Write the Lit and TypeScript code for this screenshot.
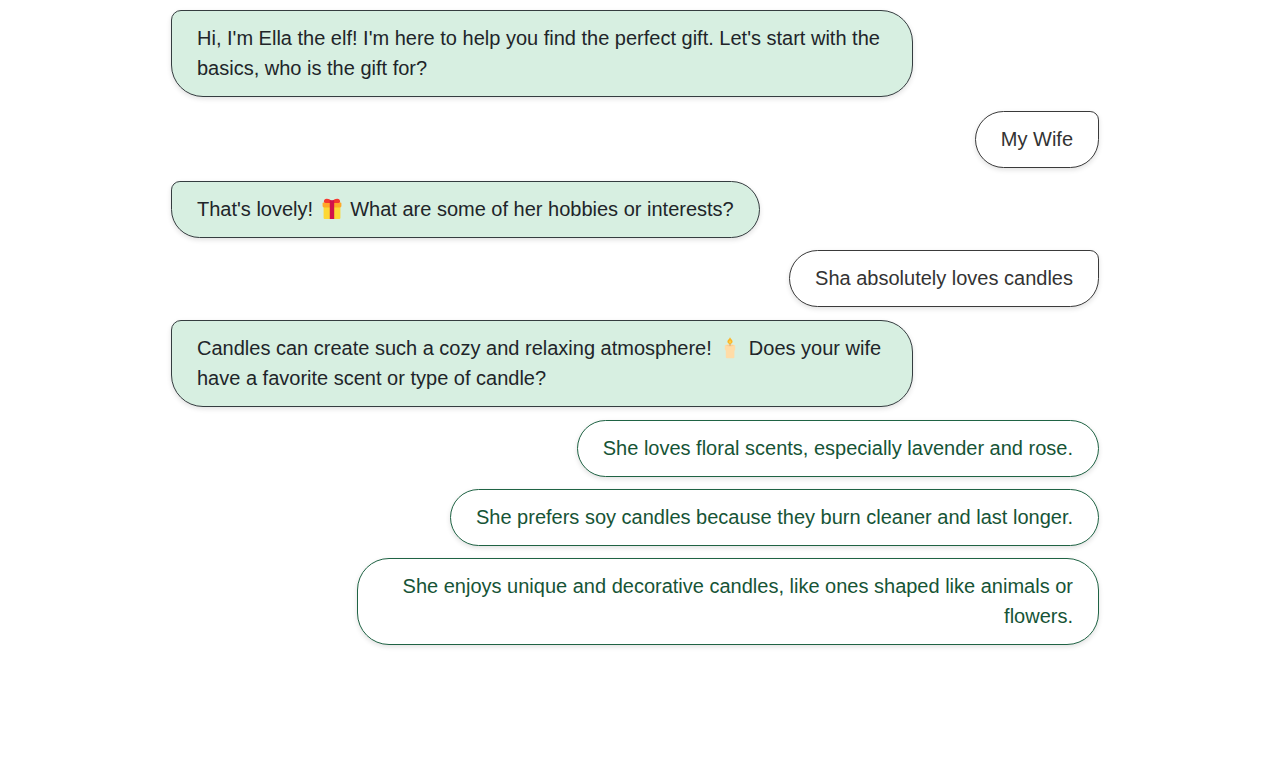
import { LitElement, html, css, svg } from "lit";
import { customElement, property, state } from "lit/decorators.js";

const gift = html`<svg class="emoji" viewBox="0 0 20 22" role="img" aria-label="gift">
  ${svg`
    <rect x="1.6" y="8" width="16.8" height="13" rx="1" fill="#fdd835"/>
    <rect x="1.6" y="8" width="16.8" height="1.8" fill="#f9bd2c"/>
    <rect x="0.6" y="4.6" width="18.8" height="4.4" rx="0.8" fill="#ffa828"/>
    <path d="M10 4.8 C7.5 5.2 3.2 5.4 2 4.2 C1.4 2.6 2.8 .8 4.8 .8 C7 .8 8.8 2 10 3.8 C11.2 2 13 .8 15.2 .8 C17.2 .8 18.6 2.6 18 4.2 C16.8 5.4 12.5 5.2 10 4.8Z" fill="#f5392f"/>
    <rect x="7.8" y="2.2" width="4.4" height="18.8" fill="#d1124b"/>
  `}
</svg>`;

const candle = html`<svg class="emoji" viewBox="0 0 20 22" role="img" aria-label="candle">
  ${svg`
    <path d="M4.8 9.4 C4.8 8 6 7.6 10 7.6 C14 7.6 15.2 8 15.2 9.4 L15.2 12.6 C15.2 13.4 14.4 13.4 14.4 14.2 L14.4 20.4 C14.4 21.6 5.8 21.6 5.8 20.4 L5.8 13.4 C5.2 13 4.8 12.4 4.8 11.4Z" fill="#ffdca7"/>
    <ellipse cx="10" cy="8.6" rx="3.8" ry="0.8" fill="#fccf94"/>
    <path d="M10 5.6V8.6" stroke="#b98a4e" stroke-width=".8"/>
    <path d="M10 0.2 C10.8 1.8 12.6 3 12.6 4.6 C12.6 6 11.4 6.9 10 6.9 C8.6 6.9 7.4 6 7.4 4.6 C7.4 3 9.4 2 10 .2Z" fill="#fbb526"/>
    <path d="M10 3 C10.6 4 11.2 4.4 11.2 5.1 C11.2 5.9 10.6 6.2 10 6.2 C9.4 6.2 8.8 5.9 8.8 5.1 C8.8 4.4 9.5 4 10 3Z" fill="#ffcf45"/>
  `}
</svg>`;

@customElement("chat-bubble")
export class ChatBubble extends LitElement {
  @property({ reflect: true }) from = "bot";

  static styles = css`
    :host {
      display: block;
      box-sizing: border-box;
      max-width: 80%;
      padding: 12px 25px 13px;
      border: 1px solid #353d40;
      border-radius: 10px 32px 32px 32px;
      background: #d7efe1;
      color: #212529;
      box-shadow: 0 2px 5px rgba(0, 0, 0, 0.12);
    }
    :host([from="user"]) {
      align-self: flex-end;
      border-color: #3a3a3a;
      border-radius: 32px 10px 32px 32px;
      background: #fff;
      color: #333;
    }
  `;

  render() {
    return html`<slot></slot>`;
  }
}

@customElement("app-root")
export class AppRoot extends LitElement {
  @state() private options = [
    "She loves floral scents, especially lavender and rose.",
    "She prefers soy candles because they burn cleaner and last longer.",
    "She enjoys unique and decorative candles, like ones shaped like animals or flowers.",
  ];

  static styles = css`
    :host {
      display: block;
      font-family: "Liberation Sans", Arial, sans-serif;
      font-size: 20px;
      line-height: 30px;
    }
    .chat {
      display: flex;
      flex-direction: column;
      gap: 13px;
      max-width: 928px;
      margin: 0 auto;
      padding: 10px 0;
    }
    .exchange,
    .options {
      display: flex;
      flex-direction: column;
      align-items: flex-start;
      gap: 12px;
    }
    .greeting {
      gap: 14px;
    }
    .options {
      align-items: flex-end;
    }
    .option {
      box-sizing: border-box;
      max-width: 80%;
      margin: 0;
      padding: 12px 25px 13px;
      border: 1px solid #1f6344;
      border-radius: 32px;
      background: #fff;
      color: #165436;
      font: inherit;
      text-align: right;
      cursor: pointer;
      box-shadow: 0 2px 5px rgba(0, 0, 0, 0.12);
    }
    .emoji {
      width: 20px;
      height: 22px;
      margin: 0 3px;
      vertical-align: -4px;
    }
  `;

  render() {
    return html`
      <main class="chat">
        <section class="exchange greeting">
          <chat-bubble>Hi, I'm Ella the elf! I'm here to help you find the perfect gift. Let's start with the basics, who is the gift for?</chat-bubble>
          <chat-bubble from="user">My Wife</chat-bubble>
        </section>
        <section class="exchange">
          <chat-bubble>That's lovely! ${gift} What are some of her hobbies or interests?</chat-bubble>
          <chat-bubble from="user">Sha absolutely loves candles</chat-bubble>
        </section>
        <section class="exchange">
          <chat-bubble>Candles can create such a cozy and relaxing atmosphere! ${candle} Does your wife have a favorite scent or type of candle?</chat-bubble>
        </section>
        <section class="options">
          ${this.options.map((text) => html`<button class="option" type="button">${text}</button>`)}
        </section>
      </main>
    `;
  }
}
